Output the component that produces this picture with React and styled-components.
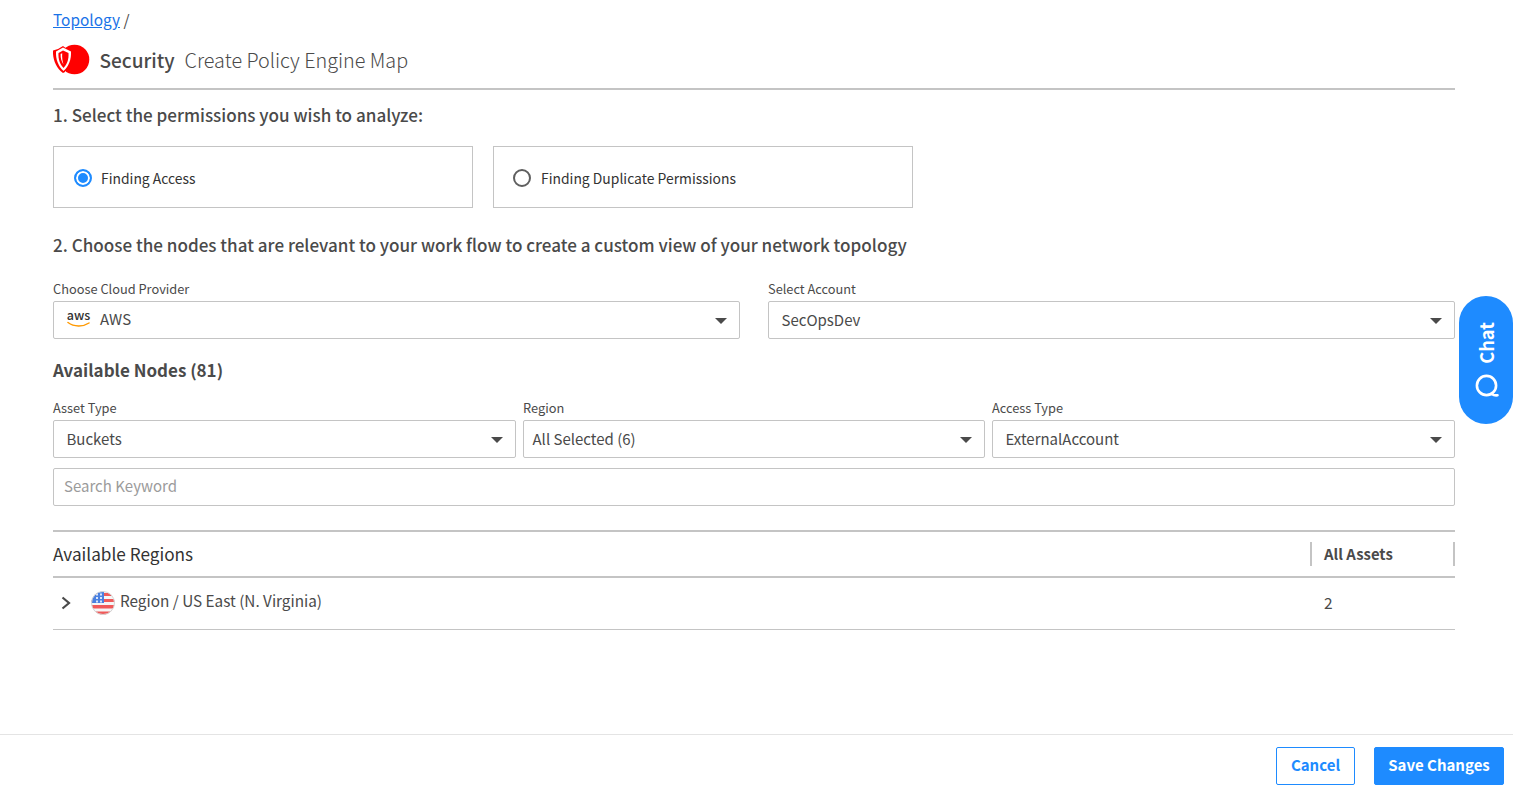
import React from 'react';
import styled, { createGlobalStyle } from 'styled-components';

const FONT = '"Noto Sans CJK JP", "Noto Sans", sans-serif';

const GlobalStyle = createGlobalStyle`
  html, body {
    margin: 0;
    padding: 0;
    background: #fff;
    font-family: ${FONT};
    color: #4a4a4a;
  }
  * { box-sizing: border-box; }
`;

const Page = styled.div`
  min-height: 795px;
  display: flex;
  flex-direction: column;
  overflow: hidden;
`;

const Main = styled.main`
  flex: 1;
  padding: 8px 58px 0 53px;
`;

const Breadcrumb = styled.div`
  font-size: 15.4px;
  line-height: 22px;
  color: #4a4a4a;
`;

const Crumb = styled.a`
  color: #1a73e8;
  text-decoration: underline;
  cursor: pointer;
`;

const TitleBar = styled.div`
  display: flex;
  align-items: center;
  height: 60px;
  padding-top: 2px;
  border-bottom: 2px solid #c4c4c4;
`;

const Title = styled.h1`
  margin: 0 0 0 9.5px;
  font-size: 19px;
  line-height: 28px;
  font-weight: 500;
  color: #4a4a4a;
`;

const Subtitle = styled.span`
  margin-left: 10px;
  font-size: 19.8px;
  line-height: 28px;
  font-weight: 300;
  color: #4a4a4a;
`;

const StepTitle = styled.h2`
  margin: ${p => p.$top}px 0 0;
  font-size: 17.07px;
  line-height: 26px;
  font-weight: 500;
  color: #4a4a4a;
`;

const RadioRow = styled.div`
  display: flex;
  gap: 20px;
  margin-top: 18px;
`;

const RadioCard = styled.label`
  width: 420px;
  height: 62px;
  display: flex;
  align-items: center;
  gap: 9px;
  padding: 2px 0 0 20px;
  border: 1px solid #c4c4c4;
  font-size: 13.9px;
  color: #333;
  cursor: pointer;
`;

const RadioDot = styled.span`
  width: 18px;
  height: 18px;
  margin-left: ${p => (p.$on ? 0 : -1)}px;
  margin-right: ${p => (p.$on ? 0 : 1)}px;
  border-radius: 50%;
  border: 2px solid ${p => (p.$on ? '#1e8bff' : '#5f5f5f')};
  background: ${p => (p.$on ? '#1e8bff' : '#fff')};
  box-shadow: ${p => (p.$on ? 'inset 0 0 0 2px #fff' : 'none')};
`;

const Grid = styled.div`
  display: grid;
  grid-template-columns: ${p => p.$cols};
  column-gap: ${p => p.$gap}px;
  margin-top: ${p => p.$top}px;
`;

const Field = styled.div`
  min-width: 0;
`;

const Label = styled.div`
  font-size: 12.8px;
  line-height: 18px;
  color: #4a4a4a;
  margin-bottom: 3px;
`;

const SelectBox = styled.div`
  height: 38px;
  display: flex;
  align-items: center;
  gap: 9px;
  padding: 0 12px 0 ${p => p.$pad || 12.5}px;
  border: 1px solid #c4c4c4;
  border-radius: 2px;
  font-size: 15px;
  color: #4a4a4a;
`;

const SelectText = styled.span`
  flex: 1;
  padding-bottom: ${p => p.$lift || 2}px;
`;

const Caret = styled.span`
  width: 0;
  height: 0;
  margin-top: 2px;
  border-left: 6px solid transparent;
  border-right: 6px solid transparent;
  border-top: 6px solid #4a4a4a;
`;

const AwsMark = styled.span`
  position: relative;
  width: 24px;
  height: 22px;
  margin: -5px 0.5px 0 0;
  font-size: 12.5px;
  line-height: 15px;
  font-weight: 500;
  color: #333;
  text-align: center;
`;

const AwsSmile = styled.svg`
  position: absolute;
  left: 0;
  top: 14px;
`;

const NodesTitle = styled.h3`
  margin: 18px 0 0;
  font-size: 17px;
  line-height: 26px;
  font-weight: 700;
  color: #4a4a4a;
`;

const Search = styled.input`
  display: block;
  width: 100%;
  height: 38px;
  margin-top: 10px;
  padding: 0 10px 3px;
  border: 1px solid #c4c4c4;
  border-radius: 2px;
  outline: none;
  font-family: ${FONT};
  font-size: 15px;
  color: #4a4a4a;
  &::placeholder { color: #9b9b9b; }
`;

const TableHead = styled.div`
  display: flex;
  align-items: center;
  height: 48px;
  margin-top: 24px;
  border-top: 2px solid #c4c4c4;
  border-bottom: 2px solid #c4c4c4;
`;

const RegionsHead = styled.div`
  flex: 1;
  padding-bottom: 2px;
  font-size: 17.2px;
  font-weight: 400;
  color: #333;
`;

const AssetsHead = styled.div`
  width: 145px;
  height: 24px;
  display: flex;
  align-items: center;
  padding: 0 0 2px 12px;
  border-left: 2px solid #c4c4c4;
  border-right: 2px solid #c4c4c4;
  font-size: 14.9px;
  font-weight: 700;
  color: #4a4a4a;
`;

const TableRow = styled.div`
  display: flex;
  align-items: center;
  height: 52px;
  border-bottom: 1px solid #c4c4c4;
`;

const Expand = styled.svg`
  margin: 0 19px 2px 7px;
`;

const FlagIcon = styled.svg`
  margin-top: -2px;
`;

const RegionName = styled.div`
  flex: 1;
  margin: -7px 0 0 5px;
  font-size: 15.3px;
  color: #4a4a4a;
`;

const AssetCount = styled.div`
  width: 145px;
  padding: 0 0 4px 14px;
  font-size: 15.5px;
  color: #4a4a4a;
`;

const Footer = styled.footer`
  height: 61px;
  display: flex;
  justify-content: flex-end;
  gap: 19px;
  padding: 12px 9px 0 0;
  border-top: 1px solid #e4e4e4;
`;

const Button = styled.button`
  height: 38px;
  width: ${p => p.$width}px;
  padding: 0 0 3px;
  border: 1px solid #1e8bff;
  border-radius: 2px;
  background: ${p => (p.$primary ? '#1e8bff' : '#fff')};
  color: ${p => (p.$primary ? '#fff' : '#1e8bff')};
  font-family: ${FONT};
  font-size: 15px;
  font-weight: 700;
  cursor: pointer;
`;

const ChatTab = styled.div`
  position: fixed;
  left: 1459px;
  top: 296px;
  width: 54px;
  height: 128px;
  padding-top: 26px;
  border-radius: 27px;
  background: #1e8bff;
  color: #fff;
  display: flex;
  flex-direction: column;
  align-items: center;
  gap: 10px;
`;

const ChatLabel = styled.span`
  writing-mode: vertical-rl;
  transform: rotate(180deg);
  font-size: 18.3px;
  line-height: 18px;
  font-weight: 700;
`;

const ChatGlyph = styled.svg`
  margin-left: 2px;
`;

const ShieldLogo = () => (
  <svg width="37" height="32" viewBox="0 0 37 32">
    <circle cx="21.5" cy="15.5" r="14.8" fill="#f00" />
    <path d="M0 6.5 L5 5 L10 2 L14 5 L12 28 L10 29 C3 24 -0.5 15 0 6.5 Z" fill="#f00" />
    <path d="M3 7.5 L10 3.5 L18 7.5 C18.5 15 15.5 23 10.5 27 C5.5 23 2.5 15 3 7.5 Z" fill="#fff" />
    <path d="M5.5 9 L10 6.5 L15.5 9 C16 15 14 20.5 10.5 24 C7 20.5 5 15 5.5 9 Z" fill="#f00" />
    <path d="M7.6 10 L9.2 9.2 C8.9 14 9.6 17.5 10.5 20.5 C8.6 17.5 7.4 14 7.6 10 Z" fill="#fff" />
  </svg>
);

const UsFlag = () => (
  <FlagIcon width="24" height="24" viewBox="0 0 24 24">
    <defs>
      <clipPath id="flagClip"><circle cx="12" cy="12" r="11.5" /></clipPath>
    </defs>
    <g clipPath="url(#flagClip)">
      <rect width="24" height="24" fill="#f6f6f6" />
      <rect y="2" width="24" height="3" fill="#f05a5a" />
      <rect y="8" width="24" height="3" fill="#f05a5a" />
      <rect y="14" width="24" height="3.5" fill="#f05a5a" />
      <rect y="20.5" width="24" height="3.5" fill="#f05a5a" />
      <rect x="0" width="13" height="12" fill="#4a80e0" />
      <path d="M5 2.5h2v2H5zM9 2.5h2v2H9zM5 6h2v2H5zM9 6h2v2H9zM5 9.5h2v2H5zM9 9.5h2v2H9z" fill="#d9e6fb" />
    </g>
    <circle cx="12" cy="12" r="11.5" fill="none" stroke="#d5d5d5" />
  </FlagIcon>
);

const ChatIcon = () => (
  <ChatGlyph width="24" height="24" viewBox="0 0 24 24" fill="none" stroke="#fff" strokeWidth="2.6" strokeLinecap="round">
    <circle cx="11.5" cy="11.5" r="9.6" />
    <path d="M16.5 20 Q19.5 21.8 22.5 21.3" />
  </ChatGlyph>
);

const Select = ({ children, pad }) => (
  <SelectBox $pad={pad}>
    <SelectText>{children}</SelectText>
    <Caret />
  </SelectBox>
);

const App = () => {
  return (
    <Page>
      <GlobalStyle />
      <Main>
        <Breadcrumb><Crumb>Topology</Crumb> /</Breadcrumb>
        <TitleBar>
          <ShieldLogo />
          <Title>Security</Title>
          <Subtitle>Create Policy Engine Map</Subtitle>
        </TitleBar>

        <StepTitle $top={12}>1. Select the permissions you wish to analyze:</StepTitle>
        <RadioRow>
          <RadioCard><RadioDot $on />Finding Access</RadioCard>
          <RadioCard><RadioDot />Finding Duplicate Permissions</RadioCard>
        </RadioRow>

        <StepTitle $top={24}>2. Choose the nodes that are relevant to your work flow to create a custom view of your network topology</StepTitle>

        <Grid $cols="687px 687px" $gap={28} $top={22}>
          <Field>
            <Label>Choose Cloud Provider</Label>
            <SelectBox>
              <AwsMark>
                aws
                <AwsSmile width="24" height="8" viewBox="0 0 24 8" fill="none">
                  <path d="M1 1.5 C7 6 16 6 22 2" stroke="#f90" strokeWidth="1.5" strokeLinecap="round" />
                </AwsSmile>
              </AwsMark>
              <SelectText $lift={4}>AWS</SelectText>
              <Caret />
            </SelectBox>
          </Field>
          <Field>
            <Label>Select Account</Label>
            <Select>SecOpsDev</Select>
          </Field>
        </Grid>

        <NodesTitle>Available Nodes (81)</NodesTitle>

        <Grid $cols="463px 462px 463px" $gap={7} $top={16}>
          <Field>
            <Label>Asset Type</Label>
            <Select>Buckets</Select>
          </Field>
          <Field>
            <Label>Region</Label>
            <Select pad={8.5}>All Selected (6)</Select>
          </Field>
          <Field>
            <Label>Access Type</Label>
            <Select>ExternalAccount</Select>
          </Field>
        </Grid>

        <Search placeholder="Search Keyword" />

        <TableHead>
          <RegionsHead>Available Regions</RegionsHead>
          <AssetsHead>All Assets</AssetsHead>
        </TableHead>
        <TableRow>
          <Expand width="12" height="14" viewBox="0 0 12 14" fill="none">
            <path d="M2.5 1.5 L9 7 L2.5 12.5" stroke="#4a4a4a" strokeWidth="2.2" />
          </Expand>
          <UsFlag />
          <RegionName>Region / US East (N. Virginia)</RegionName>
          <AssetCount>2</AssetCount>
        </TableRow>
      </Main>

      <Footer>
        <Button $width={79}>Cancel</Button>
        <Button $primary $width={130}>Save Changes</Button>
      </Footer>

      <ChatTab>
        <ChatLabel>Chat</ChatLabel>
        <ChatIcon />
      </ChatTab>
    </Page>
  );
};

export default App;
